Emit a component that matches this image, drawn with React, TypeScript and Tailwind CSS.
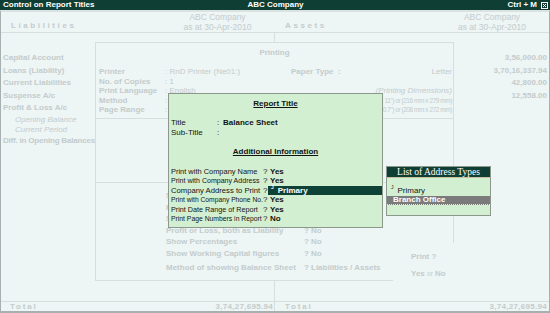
import type { FC } from "react";

/* ============================================================
   Control on Report Titles (Tally style screen)
============================================================ */

const liabilities = [
  { name: "Capital Account", amount: "3,56,000.00" },
  { name: "Loans (Liability)", amount: "3,70,16,337.94" },
  { name: "Current Liabilities", amount: "42,800.00" },
  { name: "Suspense A/c", amount: "12,558.00" },
];

const printRows = [
  { label: "Printer", value: "RnD Printer (Ne01:)" },
  { label: "No. of Copies", value: "1" },
  { label: "Print Language", value: "English" },
  { label: "Method", value: "" },
  { label: "Page Range", value: "" },
];

const configRows = [
  { label: "Show Vertical Balance Sheet", value: "No" },
  { label: "Print in Condensed Mode", value: "No" },
  { label: "Show Schedule VI Details", value: "No" },
  { label: "Profit or Loss, both as Liability", value: "No" },
  { label: "Show Percentages", value: "No" },
  { label: "Show Working Capital figures", value: "No" },
];

// labels are squeezed a little so the "?" column lines up, like the original
const infoRows = [
  { label: "Print with Company Name", value: "Yes", fit: "scale-x-[0.93]" },
  { label: "Print with Company Address", value: "Yes", fit: "scale-x-[0.88]" },
  { label: "Company Address to Print", value: "Primary", fit: "scale-x-[0.96]", active: true },
  { label: "Print with Company Phone No.", value: "Yes", fit: "scale-x-[0.84]" },
  { label: "Print Date Range of Report", value: "Yes", fit: "scale-x-[0.9]" },
  { label: "Print Page Numbers in Report", value: "No", fit: "scale-x-[0.85]" },
];

const CloseBox: FC = () => (
  <svg width="7" height="7" viewBox="0 0 7 7" className="block">
    <rect x="0.5" y="0.5" width="6" height="6" fill="none" stroke="#ffffff" strokeWidth="1" />
    <path d="M2 2 L5 5 M5 2 L2 5" stroke="#ffffff" strokeWidth="1" />
  </svg>
);

const Mark: FC = () => (
  <span className="inline-block text-[5px] leading-none align-top mr-[4px] relative -top-[1px]">J</span>
);

/* ---------------- background balance sheet ---------------- */

const BalanceSheet: FC = () => (
  <div className="flex flex-col flex-1 border-t-2 border-t-[#dae2e2] border-x border-x-[#a7b0b0] border-b-2 border-b-[#a7b0b0] text-[#c4cccc]">
    {/* header */}
    <div className="flex h-[21px] border-b border-[#d6dede]">
      <div className="flex w-[274px]">
        <div className="w-[159px] pl-[10px] flex items-end pb-[1px]">
          <span className="text-[8px] font-bold tracking-[2.6px] leading-[10px]">Liabilities</span>
        </div>
        <div className="flex-1 text-center text-[8.5px] leading-[10px]">
          <div>ABC Company</div>
          <div>as at 30-Apr-2010</div>
        </div>
      </div>
      <div className="flex flex-1">
        <div className="w-[160px] pl-[10px] flex items-end pb-[1px]">
          <span className="text-[8px] font-bold tracking-[2.6px] leading-[10px]">Assets</span>
        </div>
        <div className="flex-1 text-center text-[8.5px] leading-[10px]">
          <div>ABC Company</div>
          <div>as at 30-Apr-2010</div>
        </div>
      </div>
    </div>

    {/* body */}
    <div className="flex flex-1">
      <div className="w-[274px] border-r border-[#d6dede] pt-[19px] pl-[2px] text-[8px] font-bold">
        {liabilities.map((r) => (
          <div key={r.name} className="leading-[12.5px]">{r.name}</div>
        ))}
        <div className="leading-[12.5px]">Profit &amp; Loss A/c</div>
        <div className="leading-[10px] italic font-normal pl-[12px]">Opening Balance</div>
        <div className="leading-[10px] italic font-normal pl-[12px]">Current Period</div>
        <div className="leading-[12.5px] tracking-[-0.2px]">Diff. in Opening Balances</div>
      </div>
      <div className="flex flex-1">
        <div className="w-[160px]" />
        <div className="flex-1 pt-[19px] pr-[2px] text-right text-[8px] font-bold">
          {liabilities.map((r) => (
            <div key={r.name} className="leading-[12.5px]">{r.amount}</div>
          ))}
        </div>
      </div>
    </div>

    {/* total */}
    <div className="flex h-[10px] border-t border-[#d6dede] text-[8px] font-bold leading-[9px]">
      <div className="flex w-[274px] justify-between pl-[9px] pr-[1px] border-r border-[#d6dede]">
        <span className="tracking-[1.8px]">Total</span>
        <span className="tracking-[0.3px]">3,74,27,695.94</span>
      </div>
      <div className="flex flex-1 justify-between pl-[10px] pr-[2px]">
        <span className="tracking-[1.8px]">Total</span>
        <span className="tracking-[0.3px]">3,74,27,695.94</span>
      </div>
    </div>
  </div>
);

/* ---------------- faded printing panel ---------------- */

const PrintingPanel: FC = () => (
  <div className="absolute left-[95px] top-[42px] w-[359px] bg-[#edf5f5] text-[#c4cccc] text-[8px]">
    <div className="h-[77px] border border-[#d6dede] pt-[5px]">
      <div className="text-center font-bold leading-[10px]">Printing</div>
      <div className="flex mt-[9px] pl-[3px]">
        <div className="w-[192px]">
          {printRows.map((r) => (
            <div key={r.label} className="flex leading-[9.5px]">
              <span className="w-[66px] font-bold">{r.label}</span>
              <span>: {r.value}</span>
            </div>
          ))}
        </div>
        <div className="flex-1 pr-[1px]">
          <div className="flex justify-between leading-[9.5px]">
            <span className="font-bold">Paper Type&nbsp; :</span>
            <span>Letter</span>
          </div>
          <div className="h-[9.5px]" />
          <div className="text-right italic leading-[9.5px]">(Printing Dimensions)</div>
          <div className="text-right text-[6.5px] tracking-[-0.45px] leading-[9.5px] whitespace-nowrap">(8.5" x 11") or (216 mm x 279 mm)</div>
          <div className="text-right text-[6.5px] tracking-[-0.45px] leading-[9.5px] whitespace-nowrap">(8.2" x 10.7") or (208 mm x 272 mm)</div>
        </div>
      </div>
    </div>
    <div className="h-[64px] border-x border-b border-[#d6dede]" />
    <div className="flex h-[98px]">
      <div className="w-[298px] border-l border-b border-[#d6dede] pt-[7px] pl-[70px] font-bold">
        {configRows.map((r) => (
          <div key={r.label} className="flex leading-[11.5px]">
            <span className="w-[138px] whitespace-nowrap">{r.label}</span>
            <span className="w-[7px]">?</span>
            <span>{r.value}</span>
          </div>
        ))}
        <div className="flex leading-[11.5px] mt-[2.5px]">
          <span className="w-[138px] whitespace-nowrap">Method of showing Balance Sheet</span>
          <span className="w-[7px]">?</span>
          <span>Liabilities / Assets</span>
        </div>
      </div>
      <div className="flex-1">
        <div className="h-[60px] border-r border-[#d6dede]" />
        <div className="pl-[18px] pt-[9px] font-bold leading-[10px]">Print ?</div>
        <div className="pl-[18px] mt-[7px] font-bold leading-[10px]">
          Yes <span className="font-normal text-[6.5px]">or</span> No
        </div>
      </div>
    </div>
  </div>
);

/* ---------------- report title dialog ---------------- */

const ReportTitleDialog: FC = () => (
  <div className="absolute left-[168px] top-[93px] w-[215px] h-[135px] border border-[#8b988b] bg-[#d3efd2] text-[#141414] text-[8px]">
    <div className="mt-[5px] text-center font-bold underline leading-[10px]">Report Title</div>
    <div className="mt-[9px] flex pl-[2px] leading-[10px]">
      <span className="w-[46px]">Title</span>
      <span className="w-[6px]">:</span>
      <span className="font-bold">Balance Sheet</span>
    </div>
    <div className="flex pl-[2px] leading-[10px]">
      <span className="w-[46px]">Sub-Title</span>
      <span className="w-[6px]">:</span>
    </div>
    <div className="mt-[9px] text-center font-bold underline leading-[10px]">Additional Information</div>
    <div className="mt-[10px]">
      {infoRows.map((r) => (
        <div key={r.label} className="flex pl-[2px] leading-[9.4px]">
          <span className="w-[92px] whitespace-nowrap">
            <span className={`inline-block origin-left ${r.fit}`}>{r.label}</span>
          </span>
          <span className="w-[5px]">?</span>
          {r.active ? (
            <span className="flex-1 bg-[#0e4236] text-white font-bold pl-[3px]">
              <Mark />
              {r.value}
            </span>
          ) : (
            <span className="flex-1 pl-[2px] font-bold">{r.value}</span>
          )}
        </div>
      ))}
    </div>
  </div>
);

/* ---------------- list of address types ---------------- */

const AddressList: FC = () => (
  <div className="absolute left-[386px] top-[166px] w-[105px] border border-[#8b988b] bg-[#d3efd2] text-[8px]">
    <div className="h-[11px] bg-[#0e3e34] border-b border-[#c9c0a0] text-center text-white font-['Liberation_Serif',serif] text-[9.5px] leading-[10px]">
      List of Address Types
    </div>
    <div className="pt-[8px]">
      <div className="pl-[4px] leading-[10px] text-[#141414]">
        <Mark />
        Primary
      </div>
      <div className="h-[9px] bg-[#7b7b7b] border-b border-dotted border-[#e8e8e8] pl-[6px] text-white font-bold leading-[8px]">
        Branch Office
      </div>
      <div className="h-[10px]" />
    </div>
  </div>
);

const App = () => {
  return (
    <div className="relative w-[550px] h-[313px] overflow-hidden bg-[#edf5f5] font-['Liberation_Sans',Arial,sans-serif] flex flex-col">
      {/* title bar */}
      <div className="flex h-[10px] items-center bg-[#0e3e34] pl-[3px] pr-[2px] text-[8px] font-bold text-white leading-[10px]">
        <span className="flex-1">Control on Report Titles</span>
        <span>ABC Company</span>
        <span className="flex flex-1 items-center justify-end gap-[4px]">
          Ctrl + M
          <CloseBox />
        </span>
      </div>

      <BalanceSheet />
      <PrintingPanel />
      <ReportTitleDialog />
      <AddressList />
    </div>
  );
};

export default App;
